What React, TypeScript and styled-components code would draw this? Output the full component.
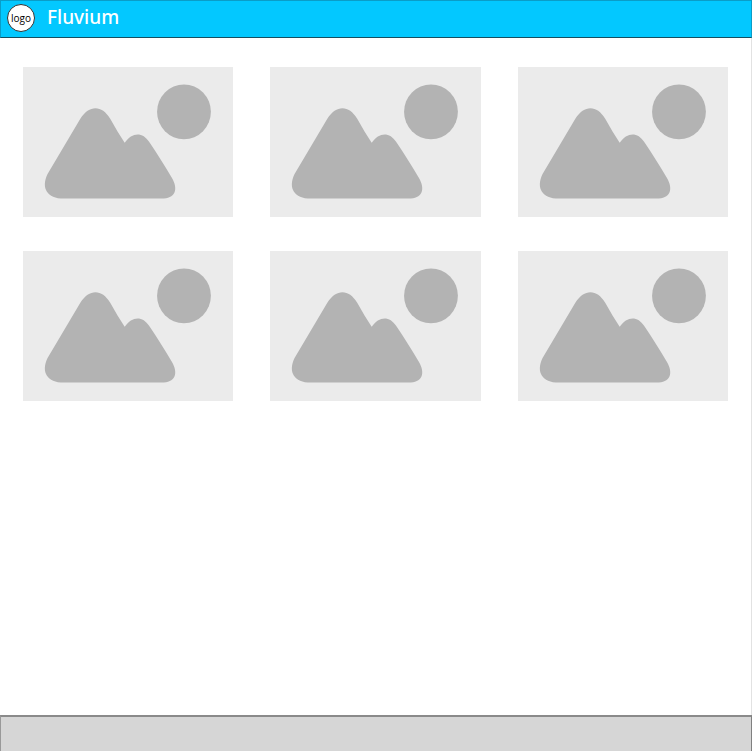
import React from "react";
import styled, { createGlobalStyle } from "styled-components";

const GlobalStyle = createGlobalStyle`
  *, *::before, *::after { box-sizing: border-box; }
  body { margin: 0; background: #ffffff; }
`;

const Page = styled.div`
  display: flex;
  flex-direction: column;
  min-height: 100vh;
  font-family: "Noto Sans", "Open Sans", sans-serif;
`;

const Header = styled.header`
  display: flex;
  align-items: center;
  gap: 12px;
  height: 38px;
  padding: 0 6px 2px;
  background: #03c8ff;
  border: 1px solid #0a9dc8;
  border-bottom-color: #144f62;
`;

const Logo = styled.a`
  display: flex;
  align-items: center;
  justify-content: center;
  width: 28px;
  height: 28px;
  border: 1px solid #333333;
  border-radius: 50%;
  background: #ffffff;
  color: #000000;
  font-family: "Open Sans", "Noto Sans", sans-serif;
  font-size: 10px;
  line-height: 12px;
  text-decoration: none;
`;

const Title = styled.h1`
  margin: 0;
  padding-bottom: 2px;
  color: #ffffff;
  font-size: 19px;
  font-weight: 500;
  line-height: 24px;
`;

const Content = styled.main`
  flex: 1;
  padding: 29px 23px;
  border-right: 1px solid #e2e2e2;
`;

const Gallery = styled.div`
  display: grid;
  grid-template-columns: repeat(3, 1fr);
  gap: 34px 37px;
`;

const Picture = styled.svg`
  display: block;
  width: 100%;
  height: auto;
  background: #ebebeb;
`;

const Footer = styled.footer`
  height: 36px;
  background: #d6d6d6;
  border: 1px solid #999999;
  border-top: 2px solid #8a8a8a;
  border-right-color: #808080;
  border-bottom: 0;
`;

function Placeholder({ label }: { label: string }) {
  return (
    <Picture viewBox="0 0 422 301" role="img" aria-label={label}>
      <g fill="#b3b3b3">
        <ellipse cx="323" cy="90" rx="54" ry="55" />
        <path d="M115 104 C133 76 158 76 175 104 L190 130 L204 152 C219 130 240 130 253 150 C268 172 284 198 298 221 C313 246 305 264 278 264 H82 C48 264 36 242 49 215 Z" />
      </g>
    </Picture>
  );
}

const pictures = [1, 2, 3, 4, 5, 6];

export default function App() {
  return (
    <>
      <GlobalStyle />
      <Page>
        <Header>
          <Logo href="#">logo</Logo>
          <Title>Fluvium</Title>
        </Header>
        <Content>
          <Gallery>
            {pictures.map((n) => (
              <Placeholder key={n} label={`Picture ${n}`} />
            ))}
          </Gallery>
        </Content>
        <Footer />
      </Page>
    </>
  );
}
